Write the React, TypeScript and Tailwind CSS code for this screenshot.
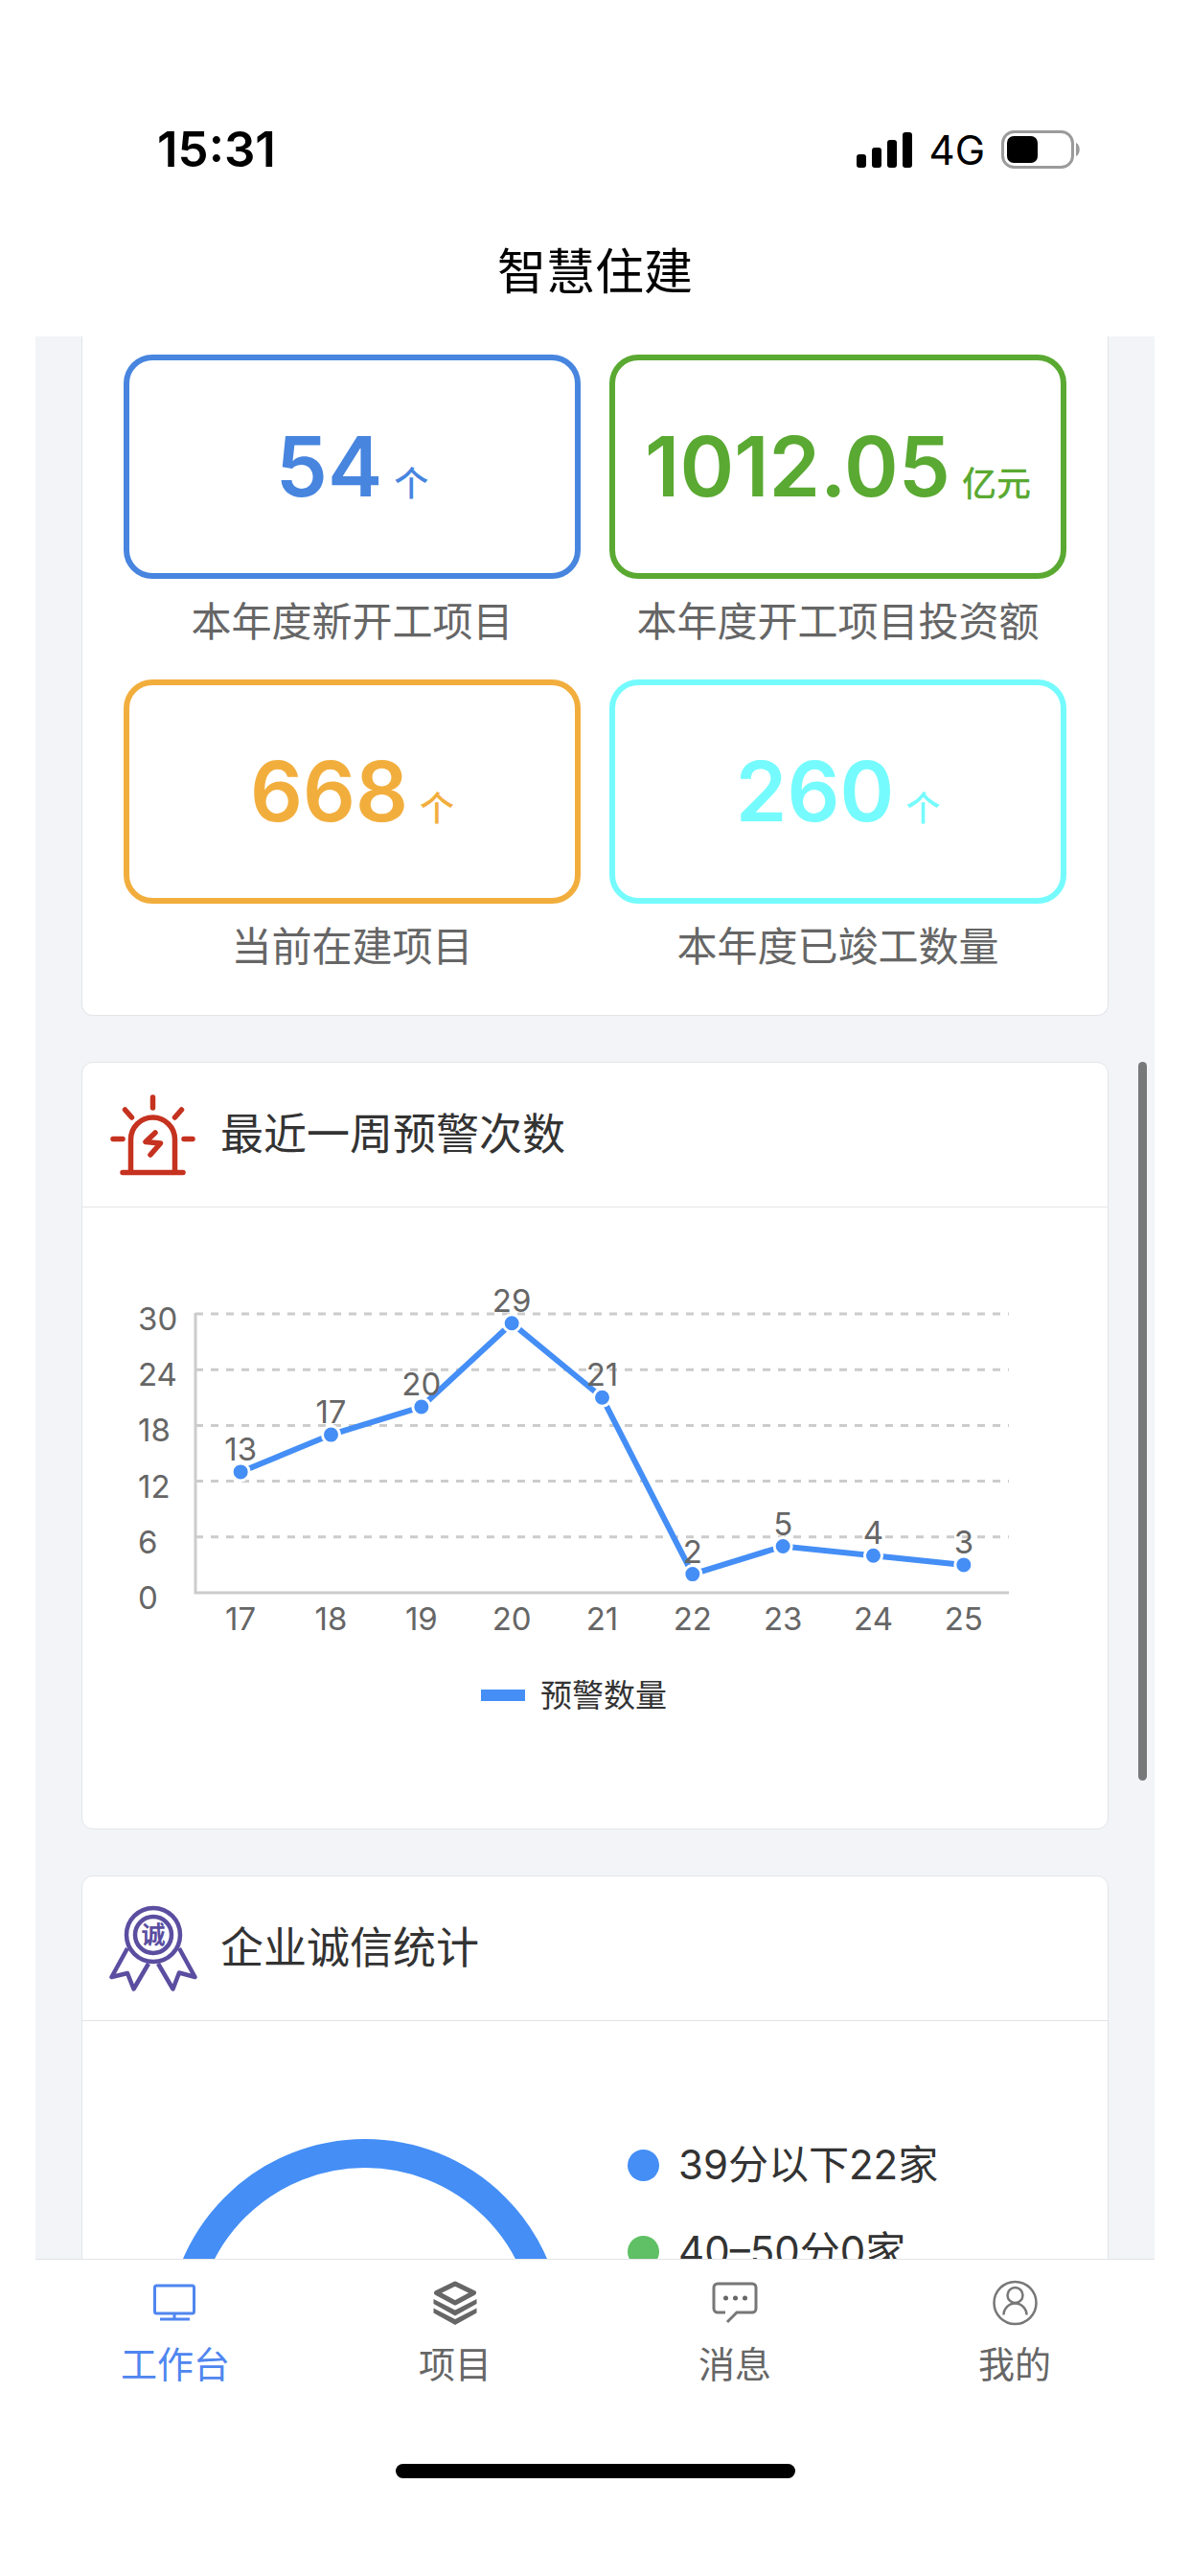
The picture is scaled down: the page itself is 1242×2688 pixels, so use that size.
import type { ReactNode } from "react";

interface Stat {
  value: string;
  unit: string;
  label: string;
  tone: string;
}

interface Tab {
  label: string;
  icon: ReactNode;
  active?: boolean;
}

const stats: Stat[] = [
  { value: "54", unit: "个", label: "本年度新开工项目", tone: "border-[#4785df] text-[#4785df]" },
  { value: "1012.05", unit: "亿元", label: "本年度开工项目投资额", tone: "border-[#5aa932] text-[#5aa932]" },
  { value: "668", unit: "个", label: "当前在建项目", tone: "border-[#f2ae3d] text-[#f2ae3d]" },
  { value: "260", unit: "个", label: "本年度已竣工数量", tone: "border-[#75fbfd] text-[#75fbfd]" },
];

const warnings = [
  { day: 17, count: 13 },
  { day: 18, count: 17 },
  { day: 19, count: 20 },
  { day: 20, count: 29 },
  { day: 21, count: 21 },
  { day: 22, count: 2 },
  { day: 23, count: 5 },
  { day: 24, count: 4 },
  { day: 25, count: 3 },
];

const credits = [
  { label: "39分以下22家", color: "bg-[#448ef6]" },
  { label: "40–50分0家", color: "bg-[#5fc065]" },
];

const SignalIcon = () => (
  <svg viewBox="0 0 59 37" className="h-[37px] w-[59px]" aria-hidden="true">
    <rect x="0" y="23" width="10" height="14" rx="3" />
    <rect x="16" y="16" width="10" height="21" rx="3" />
    <rect x="32" y="8" width="10" height="29" rx="3" />
    <rect x="48" y="0" width="10" height="37" rx="3" />
  </svg>
);

const BatteryIcon = () => (
  <svg viewBox="0 0 83 40" className="h-10 w-[83px]" aria-hidden="true">
    <rect x="1.5" y="1.5" width="73" height="37" rx="12" fill="none" stroke="#9b9b9b" strokeWidth="3" />
    <rect x="6" y="6" width="32" height="28" rx="7" />
    <path d="M78 13c5 2 5 12 0 14z" fill="#9b9b9b" />
  </svg>
);

const AlarmIcon = () => (
  <svg
    viewBox="0 0 92 90"
    className="h-[90px] w-[92px] shrink-0"
    fill="none"
    stroke="#c5321f"
    strokeWidth="5.5"
    strokeLinecap="round"
    strokeLinejoin="round"
    aria-hidden="true"
  >
    <path d="M45.5 6v11M16.5 19l7 8M75.5 19l-7 8M4 49.5h10M78 49.5h9M14 84.5h63" />
    <path d="M22.5 83V50a23 23 0 0 1 46 0v33" />
    <path d="M48 43l-10 9.5 15.5 1.5L43 66" />
  </svg>
);

const MedalIcon = () => (
  <svg
    viewBox="0 0 92 90"
    className="h-[90px] w-[92px] shrink-0"
    fill="none"
    stroke="#5b4ea0"
    strokeWidth="4.5"
    strokeLinejoin="round"
    aria-hidden="true"
  >
    <circle cx="46" cy="31" r="28" />
    <circle cx="46" cy="31" r="19" />
    <path d="M19 45L2.5 75l16.5-4 6.5 16.5L41 61" />
    <path d="M73 45l16.5 30L73 70.5l-6.5 17L51 61" />
    <text x="46" y="40" textAnchor="middle" fontSize="25" fontWeight="700" fill="#5b4ea0" stroke="none">
      诚
    </text>
  </svg>
);

const MonitorIcon = () => (
  <svg viewBox="0 0 48 48" className="size-12" fill="none" stroke="currentColor" strokeWidth="3" aria-hidden="true">
    <rect x="2.5" y="6" width="41" height="29" rx="2" />
    <path d="M23 35v6M8 41h31" />
  </svg>
);

const LayersIcon = () => (
  <svg viewBox="0 0 48 48" className="size-12" fill="currentColor" aria-hidden="true">
    <path
      d="M24 4L43.5 13.5 24 24 4.5 13.5z"
      fill="none"
      stroke="currentColor"
      strokeWidth="5"
      strokeLinejoin="round"
    />
    <path d="M1.5 20L24 31.5 46.5 20v5L24 37.5 1.5 25z" />
    <path d="M1.5 29.5L24 41l22.5-11.5v5L24 47 1.5 34.5z" />
  </svg>
);

const MessageIcon = () => (
  <svg viewBox="0 0 48 48" className="size-12" fill="none" stroke="#777" strokeWidth="3" aria-hidden="true">
    <path d="M14 34H6a4 4 0 0 1-4-4V8a4 4 0 0 1 4-4h36a4 4 0 0 1 4 4v22a4 4 0 0 1-4 4H26L16 44" />
    <g fill="#666" stroke="none">
      <circle cx="14.5" cy="19" r="2.5" />
      <circle cx="24.5" cy="19" r="2.5" />
      <circle cx="34.5" cy="19" r="2.5" />
    </g>
  </svg>
);

const ProfileIcon = () => (
  <svg viewBox="0 0 48 48" className="size-12" fill="none" stroke="#777" strokeWidth="2.5" aria-hidden="true">
    <circle cx="24.5" cy="24" r="22" />
    <circle cx="24.5" cy="16" r="8" />
    <path d="M12.5 36.5a12 12 0 0 1 24 0" />
  </svg>
);

const tabs: Tab[] = [
  { label: "工作台", icon: <MonitorIcon />, active: true },
  { label: "项目", icon: <LayersIcon /> },
  { label: "消息", icon: <MessageIcon /> },
  { label: "我的", icon: <ProfileIcon /> },
];

const StatItem = ({ value, unit, label, tone }: Stat) => (
  <div>
    <div className={`flex h-[234px] items-center justify-center rounded-[30px] border-6 ${tone}`}>
      <p className="whitespace-nowrap text-[86px] leading-none font-semibold">
        {value}
        <span className="ml-3 text-4xl leading-none font-medium">{unit}</span>
      </p>
    </div>
    <p className="mt-[15px] text-center text-[42px] leading-[60px] text-[#666]">{label}</p>
  </div>
);

const Card = ({ title, icon, children }: { title: string; icon: ReactNode; children: ReactNode }) => (
  <section className="mt-12 rounded-xl border border-[#e3e5e8] bg-white">
    <header className="flex h-[151px] items-center gap-6 border-b border-[#e3e5e8] px-7">
      {icon}
      <h2 className="text-[45px] text-[#333]">{title}</h2>
    </header>
    {children}
  </section>
);

// plot area inside the chart's own coordinates
const LEFT = 118;
const RIGHT = 967;
const BASE = 402;
const TOP = 111;
const MAX = 30;

const WarningChart = () => {
  const step = (RIGHT - LEFT) / warnings.length;
  const toY = (n: number) => BASE - (n / MAX) * (BASE - TOP);
  const points = warnings.map((w, i) => ({ ...w, x: LEFT + step * (i + 0.5), y: toY(w.count) }));

  return (
    <svg viewBox="0 0 1070 500" className="w-full" fontSize="33" fill="#666" role="img" aria-label="预警数量">
      {[0, 6, 12, 18, 24, 30].map((n) => (
        <g key={n}>
          <text x="58" y={toY(n) + 17}>
            {n}
          </text>
          {n > 0 && (
            <line x1={LEFT} x2={RIGHT} y1={toY(n)} y2={toY(n)} stroke="#ccc" strokeWidth="3" strokeDasharray="8 8" />
          )}
        </g>
      ))}
      <path d={`M${LEFT} ${TOP - 1}V${BASE}H${RIGHT}`} fill="none" stroke="#ccc" strokeWidth="3" />
      <polyline points={points.map((p) => `${p.x},${p.y}`).join(" ")} fill="none" stroke="#448ef6" strokeWidth="6" />
      {points.map((p) => (
        <g key={p.day} textAnchor="middle">
          <circle cx={p.x} cy={p.y} r="9" fill="#448ef6" stroke="#fff" strokeWidth="3" />
          <text x={p.x} y={p.y - 12}>
            {p.count}
          </text>
          <text x={p.x} y={BASE + 39}>
            {p.day}
          </text>
        </g>
      ))}
    </svg>
  );
};

const App = () => {
  return (
    <div className="flex h-screen flex-col bg-white font-['Inter','Noto_Sans_CJK_SC',sans-serif]">
      <header className="pt-[126px] pb-[33px]">
        <div className="flex h-[60px] items-center justify-between pr-[114px] pl-[164px]">
          <time className="text-[51px] font-semibold">15:31</time>
          <div className="flex items-center gap-[17px]">
            <SignalIcon />
            <span className="text-[42px]">4G</span>
            <BatteryIcon />
          </div>
        </div>
        <h1 className="mt-16 text-center text-[51px] leading-[68px]">智慧住建</h1>
      </header>

      <div className="relative mx-[37px] min-h-0 flex-1">
        <main className="h-full overflow-y-auto bg-[#f2f4f7] px-12 [scrollbar-width:none]">
          <section className="grid grid-cols-2 gap-[30px] rounded-b-xl border border-t-0 border-[#e3e5e8] bg-white px-[43px] pt-[19px] pb-[41px]">
            {stats.map((stat) => (
              <StatItem key={stat.label} {...stat} />
            ))}
          </section>

          <Card title="最近一周预警次数" icon={<AlarmIcon />}>
            <WarningChart />
            <div className="flex h-[148px] justify-center gap-4 pr-11">
              <span className="mt-[3px] h-3 w-[46px] bg-[#448ef6]" />
              <span className="text-[33px] leading-[18px] text-[#333]">预警数量</span>
            </div>
          </Card>

          <Card title="企业诚信统计" icon={<MedalIcon />}>
            <div className="flex items-start gap-[67px] px-[88px] pt-[123px]">
              <svg viewBox="0 0 414 414" className="w-[414px] shrink-0" aria-hidden="true">
                <circle cx="207" cy="207" r="192" fill="none" stroke="#448ef6" strokeWidth="30" />
              </svg>
              <ul className="flex flex-col gap-9">
                {credits.map((item) => (
                  <li key={item.label} className="flex items-center gap-5 text-[42px] leading-[54px] text-[#333]">
                    <span className={`size-[33px] rounded-full ${item.color}`} />
                    {item.label}
                  </li>
                ))}
              </ul>
            </div>
          </Card>
        </main>
        <div className="absolute top-[757px] right-2 h-[750px] w-[9px] rounded-full bg-[#76787a]" />
      </div>

      <footer className="mx-[37px] border-t border-[#e1e4e7] pt-[21px] pb-[102px]">
        <nav className="grid grid-cols-4">
          {tabs.map((tab) => (
            <button
              key={tab.label}
              type="button"
              className={`flex flex-col items-center gap-[17px] text-[38px] leading-[46px] ${
                tab.active ? "text-[#4f86f0]" : "text-[#666]"
              }`}
            >
              {tab.icon}
              {tab.label}
            </button>
          ))}
        </nav>
        <div className="mx-auto mt-[81px] h-[15px] w-[417px] rounded-full bg-black" />
      </footer>
    </div>
  );
};

export default App;
